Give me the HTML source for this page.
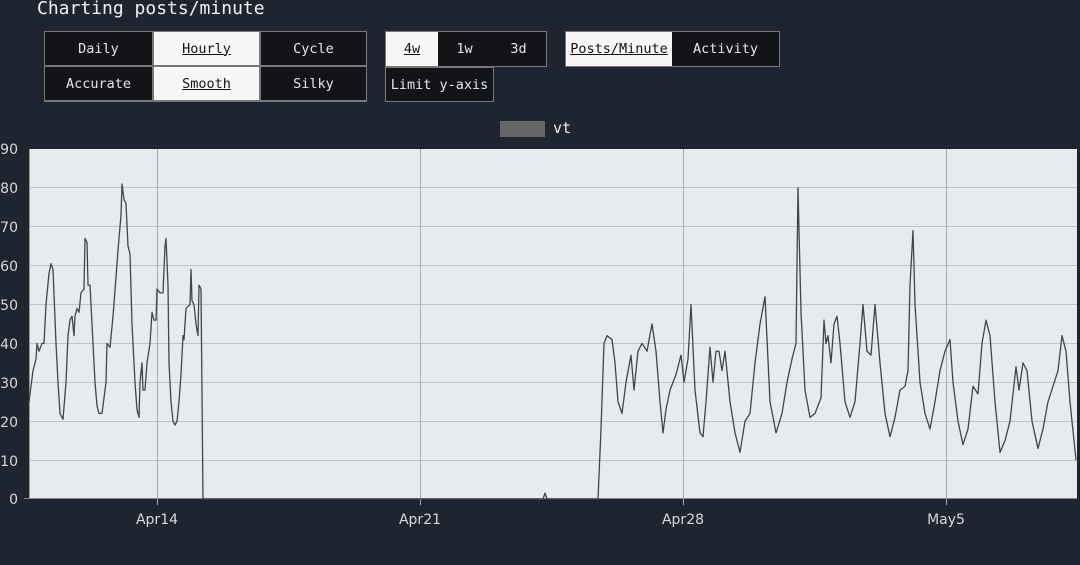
<!DOCTYPE html>
<html><head><meta charset="utf-8"><style>
body{margin:0;width:1080px;height:565px;background:#1f2530;overflow:hidden;position:relative;font-family:"DejaVu Sans Mono","Liberation Mono",monospace;color:#e8e8e8}
.t{position:absolute;left:37px;top:-2px;font-size:18px;color:#f0f0f0}
.g{position:absolute;border:1px solid #777;background:#777;display:grid;gap:2px}
.c{background:#121418;color:#e6e6e6;font-size:13.5px;display:flex;align-items:center;justify-content:center}
.w{background:#f7f7f7;color:#111;text-decoration:underline}
</style></head><body>
<div class="t">Charting posts/minute</div>
<div class="g" style="left:44px;top:31px;width:321px;height:69px;grid-template-columns:107fr 105fr 105fr;grid-template-rows:33px 33px">
<div class="c">Daily</div><div class="c w">Hourly</div><div class="c">Cycle</div>
<div class="c">Accurate</div><div class="c w">Smooth</div><div class="c">Silky</div></div>
<div class="g" style="left:385px;top:31px;width:160px;height:34px;grid-template-columns:52fr 53fr 55fr;gap:0">
<div class="c w">4w</div><div class="c">1w</div><div class="c">3d</div></div>
<div class="g" style="left:385px;top:67px;width:107px;height:33px;grid-template-columns:1fr;gap:0"><div class="c">Limit y-axis</div></div>
<div class="g" style="left:565px;top:31px;width:213px;height:34px;grid-template-columns:106fr 107fr;gap:0">
<div class="c w">Posts/Minute</div><div class="c">Activity</div></div>
<div style="position:absolute;left:500px;top:121px;width:45px;height:16px;background:#666"></div>
<div style="position:absolute;left:553px;top:119px;font-size:15px;color:#eee">vt</div>
<svg style="position:absolute;left:0;top:0" width="1080" height="565">
<rect x="29" y="149" width="1048" height="350" fill="#e8ebee"/>
<g stroke="#c2c5c8" stroke-width="1">
<line x1="29" x2="1077" y1="187.5" y2="187.5"/><line x1="29" x2="1077" y1="226.5" y2="226.5"/><line x1="29" x2="1077" y1="265.5" y2="265.5"/><line x1="29" x2="1077" y1="304.5" y2="304.5"/><line x1="29" x2="1077" y1="343.5" y2="343.5"/><line x1="29" x2="1077" y1="382.5" y2="382.5"/><line x1="29" x2="1077" y1="421.5" y2="421.5"/><line x1="29" x2="1077" y1="460.5" y2="460.5"/>
</g>
<g stroke="#aaa" stroke-width="1">
<line x1="157.5" x2="157.5" y1="149" y2="505"/><line x1="420.5" x2="420.5" y1="149" y2="505"/><line x1="683.5" x2="683.5" y1="149" y2="505"/><line x1="946.5" x2="946.5" y1="149" y2="505"/>
<line x1="29.5" x2="29.5" y1="149" y2="499" stroke="#999"/>
<line x1="24" x2="1077" y1="498.5" y2="498.5" stroke="#888"/>
</g>
<g transform="translate(0,499) scale(1,-3.889)">
<polyline fill="none" stroke="#444" stroke-width="1.3" vector-effect="non-scaling-stroke" stroke-linejoin="round" points="29,25 33,33 36,36 37,40 39,38 42,40 44,40 46,50 49,58 51,60.5 53,59 56,40 58,30 60,22 63,20.5 66,30 68,42 70,46 72,47 74,42 75,47 77,49 79,48 81,53 84,54 85,67 87,66 88,55 90,55 92,45 95,30 97,24 99,22 102,22 104,26 106,30 107,40 110,39 113,47 116,57 118,64 121,73 122,81 124,77 126,76 128,65 130,63 132,45 135,30 137,23 139,21 140,30 142,35 143,28 145,28 147,35 150,40 152,48 154,46 156,46 157,54 160,53 163,53 165,65 166,67 168,55 169,35 171,25 173,20 175,19 177,20 179,25 181,32 183,42 184,41 186,49 190,50 191,59 192,51 194,50 196,45 198,42 199,55 201,54 203,0 543,0 545,1.5 547,0 598,0 601,18 604,40 607,42 612,41 615,35 618,25 622,22 626,30 631,37 634,28 638,38 642,40 647,38 652,45 656,38 660,25 663,17 666,23 670,28 676,32 681,37 684,30 688,36 691,50 695,28 700,17 703,16 706,25 710,39 713,30 716,38 719,38 722,33 725,38 730,25 735,17 740,12 745,20 750,22 755,35 760,45 765,52 770,25 776,17 782,22 787,30 792,36 796,40 798,80 801,48 805,28 810,21 815,22 821,26 824,46 826,40 828,42 831,35 834,45 837,47 840,40 845,25 850,21 855,25 860,40 863,50 867,38 871,37 875,50 880,35 885,22 890,16 895,21 900,28 905,29 908,33 910,55 913,69 915,50 920,30 925,22 930,18 935,25 940,33 945,38 950,41 953,30 958,20 963,14 968,18 973,29 978,27 982,40 986,46 990,42 995,25 1000,12 1005,15 1010,20 1016,34 1019,28 1023,35 1027,33 1032,20 1038,13 1043,18 1048,25 1053,29 1058,33 1062,42 1066,38 1070,25 1076,10"/>
</g>
<g font-family="DejaVu Sans, Liberation Sans, sans-serif" font-size="14" fill="#d8d8d8" text-anchor="end">
<text x="18" y="154">90</text><text x="18" y="193">80</text><text x="18" y="232">70</text><text x="18" y="271">60</text><text x="18" y="310">50</text><text x="18" y="349">40</text><text x="18" y="388">30</text><text x="18" y="427">20</text><text x="18" y="466">10</text><text x="18" y="504">0</text>
</g>
<g font-family="DejaVu Sans, Liberation Sans, sans-serif" font-size="14" fill="#d8d8d8" text-anchor="middle">
<text x="157" y="524">Apr14</text><text x="420" y="524">Apr21</text><text x="683" y="524">Apr28</text><text x="946" y="524">May5</text>
</g>
</svg>
</body></html>
